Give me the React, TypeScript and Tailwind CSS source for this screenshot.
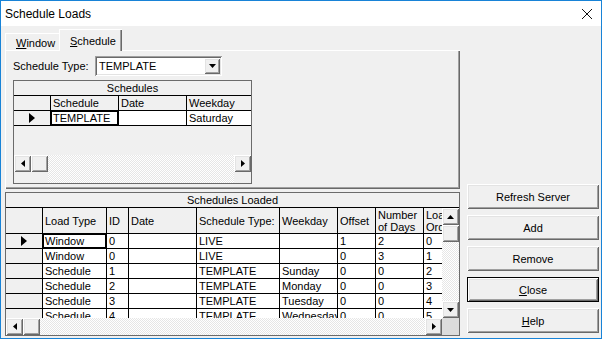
import React from 'react';

const raised = 'shadow-[inset_1px_1px_#ffffff,inset_-1px_-1px_#696969,inset_2px_2px_#e3e3e3,inset_-2px_-2px_#a0a0a0]';
const dither = 'bg-[repeating-conic-gradient(#ffffff_0%_25%,#e6e6e6_0%_50%)] [background-size:2px_2px]';

const Tri = ({ dir, className = '' }: { dir: 'up' | 'down' | 'left' | 'right'; className?: string }) => {
  const pts = {
    up: '0,4 7,4 3.5,0',
    down: '0,0 7,0 3.5,4',
    left: '4,0 4,7 0,3.5',
    right: '0,0 0,7 4,3.5',
  }[dir];
  const box = dir === 'up' || dir === 'down' ? '0 0 7 4' : '0 0 4 7';
  const size = dir === 'up' || dir === 'down' ? 'w-[7px] h-[4px]' : 'w-[4px] h-[7px]';
  return (
    <svg viewBox={box} className={`${size} ${className}`}>
      <polygon points={pts} fill="#000" />
    </svg>
  );
};

const ArrowBtn = ({ dir }: { dir: 'up' | 'down' | 'left' | 'right' }) => (
  <div className={`w-[17px] h-[17px] shrink-0 bg-[#f0f0f0] flex items-center justify-center ${raised}`}>
    <Tri dir={dir} />
  </div>
);

const Thumb = () => <div className={`w-[17px] h-[17px] shrink-0 bg-[#f0f0f0] ${raised}`} />;

const RowMark = () => (
  <svg viewBox="0 0 6 10" className="w-[6px] h-[10px]">
    <polygon points="0,0 0,10 6,5" fill="#000" />
  </svg>
);

const HScroll = () => (
  <div className="flex h-[17px] flex-1 min-w-0">
    <ArrowBtn dir="left" />
    <Thumb />
    <div className={`flex-1 ${dither}`} />
    <ArrowBtn dir="right" />
  </div>
);

const cell = 'shrink-0 h-full border-r border-black px-[2px] overflow-hidden whitespace-nowrap';

const loadCols = [
  { label: ['Load Type'], w: 'w-[64px]' },
  { label: ['ID'], w: 'w-[22px]' },
  { label: ['Date'], w: 'w-[68px]' },
  { label: ['Schedule Type:'], w: 'w-[83px]' },
  { label: ['Weekday'], w: 'w-[58px]' },
  { label: ['Offset'], w: 'w-[38px]' },
  { label: ['Number', 'of Days'], w: 'w-[48px]' },
  { label: ['Load', 'Order'], w: 'w-[44px]' },
];

const loads = [
  ['Window', '0', '', 'LIVE', '', '1', '2', '0'],
  ['Window', '0', '', 'LIVE', '', '0', '3', '1'],
  ['Schedule', '1', '', 'TEMPLATE', 'Sunday', '0', '0', '2'],
  ['Schedule', '2', '', 'TEMPLATE', 'Monday', '0', '0', '3'],
  ['Schedule', '3', '', 'TEMPLATE', 'Tuesday', '0', '0', '4'],
  ['Schedule', '4', '', 'TEMPLATE', 'Wednesday', '0', '0', '5'],
];

const Button = ({ children, isDefault }: { children: React.ReactNode; isDefault?: boolean }) => (
  <div className={`h-[25px] flex ${isDefault ? 'border border-black' : ''}`}>
    <div className={`flex-1 bg-[#f0f0f0] flex items-center justify-center ${raised}`}>{children}</div>
  </div>
);

export default function App() {
  return (
    <div className="w-[603px] h-[340px] bg-white font-['Liberation_Sans',Arial,sans-serif] text-[11px] leading-[14px] text-black">
      <div className="w-[602px] h-[339px] border border-[#1883d7] flex flex-col">
        {/* title bar */}
        <div className="h-[25px] bg-white flex items-center justify-between pl-[4px] pr-[9px]">
          <span className="text-[12px]">Schedule Loads</span>
          <svg viewBox="0 0 10 10" className="w-[10px] h-[10px]">
            <path d="M0 0 L10 10 M10 0 L0 10" stroke="#111" strokeWidth="1" />
          </svg>
        </div>

        <div className="flex-1 bg-[#f0f0f0] flex pl-[4px] pr-[2px]">
          {/* left column */}
          <div className="w-[455px] flex flex-col pt-[3px]">
            {/* tabs */}
            <div className="h-[21px] flex items-end">
              <div className="h-[17px] w-[54px] border-l border-t border-white pl-[10px] pt-[2px]">
                <span className="underline">W</span>indow
              </div>
              <div className="relative z-10 h-[22px] -mb-px w-[63px] bg-[#f0f0f0] border-l border-t border-white shadow-[inset_-1px_0_#696969,inset_-2px_0_#a0a0a0] pl-[10px] pt-[4px]">
                <span className="underline">S</span>chedule
              </div>
            </div>
            <div className={`h-[139px] flex flex-col pl-[8px] pt-[6px] ${'shadow-[inset_1px_1px_#ffffff,inset_-1px_-1px_#696969,inset_-2px_-2px_#a0a0a0]'}`}>
              <div className="flex items-center h-[20px]">
                <span className="w-[82px]">Schedule Type:</span>
                <div className="w-[127px] h-[20px] bg-white flex items-center shadow-[inset_1px_1px_#a0a0a0,inset_-1px_-1px_#ffffff,inset_2px_2px_#696969,inset_-2px_-2px_#e3e3e3] p-[2px]">
                  <span className="flex-1 pl-[2px]">TEMPLATE</span>
                  <div className={`w-[16px] h-full bg-[#f0f0f0] flex items-center justify-center ${raised}`}>
                    <Tri dir="down" />
                  </div>
                </div>
              </div>
              {/* schedules grid */}
              <div className="mt-[4px] w-[239px] h-[104px] border border-[#6b6b6b] flex flex-col bg-[#f0f0f0]">
                <div className="h-[15px] border-b border-black text-center">Schedules</div>
                <div className="h-[15px] flex border-b border-black">
                  <div className={`${cell} w-[37px]`} />
                  <div className={`${cell} w-[68px]`}>Schedule</div>
                  <div className={`${cell} w-[68px]`}>Date</div>
                  <div className={`${cell} flex-1 border-r-0`}>Weekday</div>
                </div>
                <div className="h-[15px] flex border-b border-black">
                  <div className={`${cell} w-[37px] flex items-center justify-center`}>
                    <RowMark />
                  </div>
                  <div className={`${cell} w-[68px] bg-white shadow-[inset_0_0_0_1px_#000]`}>TEMPLATE</div>
                  <div className={`${cell} w-[68px] bg-white`} />
                  <div className={`${cell} flex-1 border-r-0 bg-white`}>Saturday</div>
                </div>
                <div className="flex-1" />
                <HScroll />
              </div>
            </div>

            {/* schedules loaded grid */}
            <div className="mt-[3px] h-[144px] border border-[#6b6b6b] flex flex-col bg-[#f0f0f0]">
              <div className="h-[15px] border-b border-black text-center">Schedules Loaded</div>
              <div className="h-[110px] flex">
                <div className="flex-1 min-w-0 overflow-hidden">
                  <div className="h-[26px] flex border-b border-black">
                    <div className={`${cell} w-[37px]`} />
                    {loadCols.map((c) => (
                      <div key={c.label.join()} className={`${cell} ${c.w} flex flex-col justify-center leading-[12px]`}>
                        {c.label.map((l) => (
                          <span key={l}>{l}</span>
                        ))}
                      </div>
                    ))}
                  </div>
                  {loads.map((r, i) => (
                    <div key={i} className="h-[15px] flex border-b border-black">
                      <div className={`${cell} w-[37px] flex items-center justify-center`}>
                        {i === 0 && <RowMark />}
                      </div>
                      {r.map((v, j) => (
                        <div
                          key={j}
                          className={`${cell} ${loadCols[j].w} bg-white ${i === 0 && j === 0 ? 'shadow-[inset_0_0_0_1px_#000]' : ''}`}
                        >
                          {v}
                        </div>
                      ))}
                    </div>
                  ))}
                </div>
                <div className="w-[17px] flex flex-col">
                  <ArrowBtn dir="up" />
                  <Thumb />
                  <div className={`flex-1 ${dither}`} />
                  <ArrowBtn dir="down" />
                </div>
              </div>
              <div className="flex">
                <HScroll />
                <div className="w-[17px] h-[17px] bg-[#dcdcdc]" />
              </div>
            </div>
          </div>

          {/* buttons */}
          <div className="ml-[7px] flex-1 flex flex-col justify-end gap-[6px] pb-[5px]">
            <Button>Refresh Server</Button>
            <Button>Add</Button>
            <Button>Remove</Button>
            <Button isDefault>
              <span>
                <span className="underline">C</span>lose
              </span>
            </Button>
            <Button>
              <span>
                <span className="underline">H</span>elp
              </span>
            </Button>
          </div>
        </div>
      </div>
    </div>
  );
}
